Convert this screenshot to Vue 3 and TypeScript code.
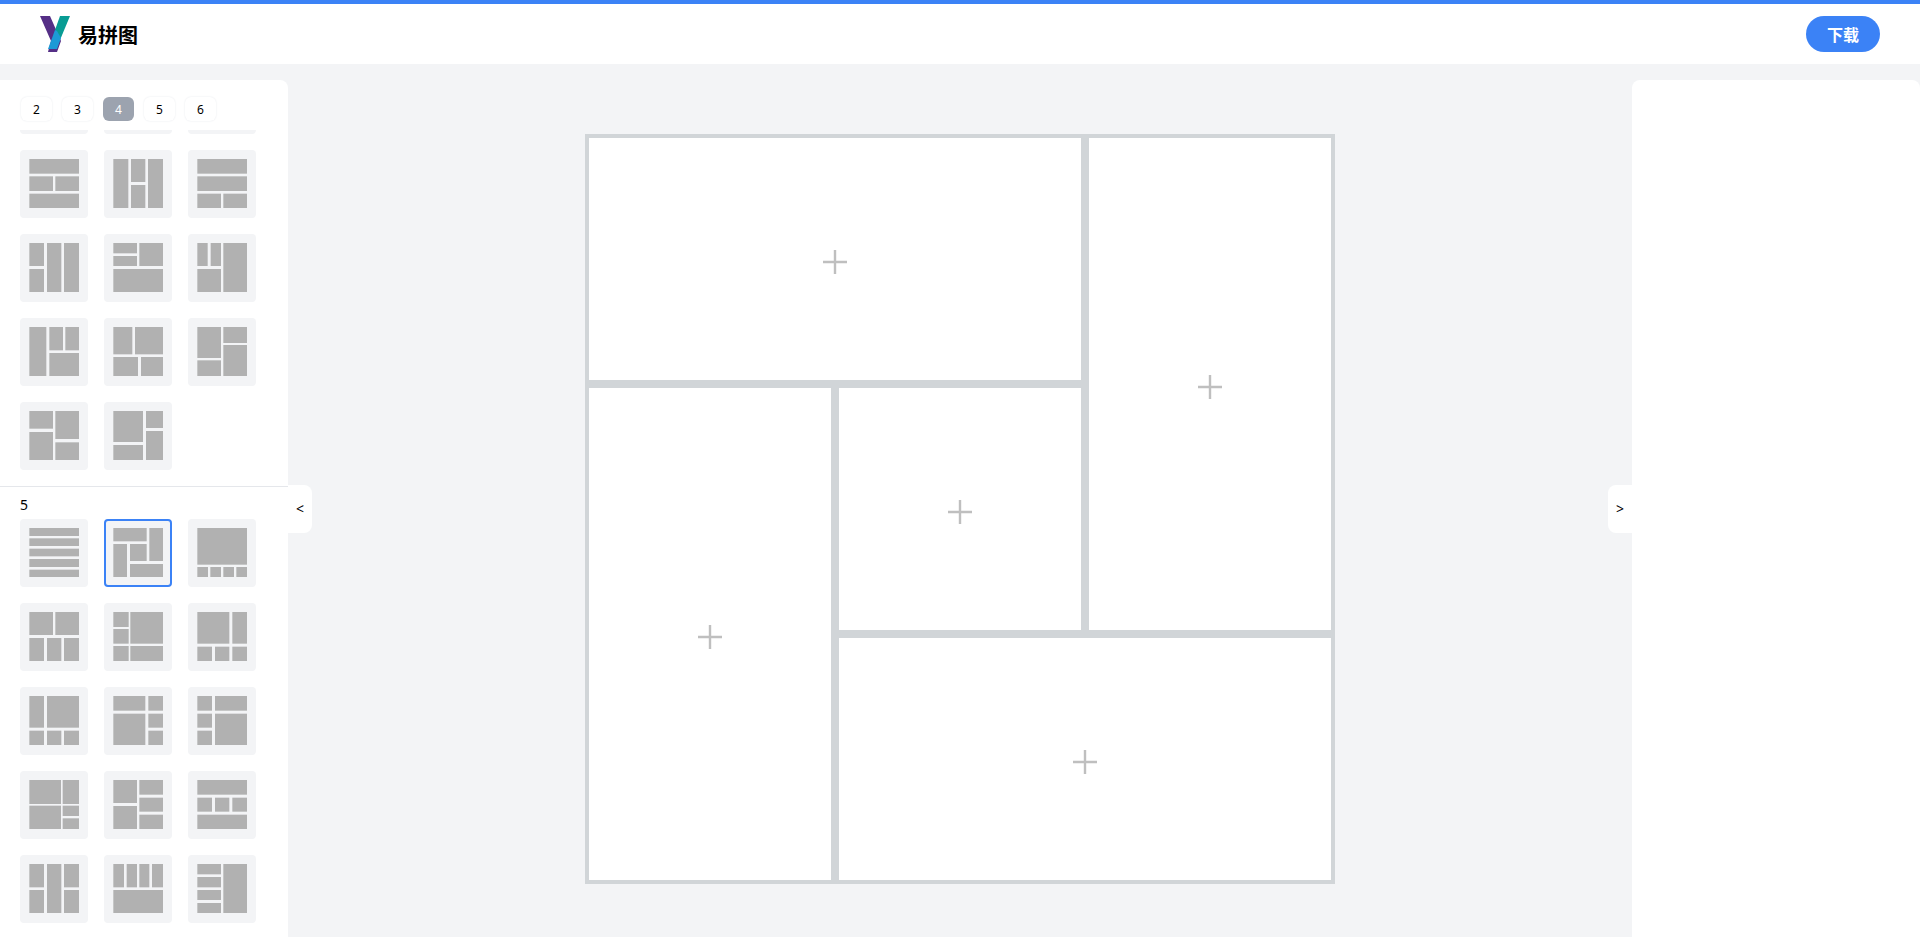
<script setup lang="ts">
import { onMounted, ref } from 'vue'

// Each block is [left, top, right, bottom] on a 149 x 147 board.
type Block = [number, number, number, number]
interface Layout {
  id: string
  blocks: Block[]
}
interface Group {
  count: number
  title?: string
  layouts: Layout[]
}

const groups: Group[] = [
  {
    count: 4,
    layouts: [
      { id: '4-rows', blocks: [[0, 0, 149, 32], [0, 38, 149, 70], [0, 77, 149, 109], [0, 115, 149, 147]] },
      { id: '4-cols', blocks: [[0, 0, 32, 147], [39, 0, 71, 147], [78, 0, 110, 147], [117, 0, 149, 147]] },
      { id: '4-grid', blocks: [[0, 0, 71, 70], [78, 0, 149, 70], [0, 77, 71, 147], [78, 77, 149, 147]] },
      { id: '4-a', blocks: [[0, 0, 149, 44], [0, 52, 71, 96], [78, 52, 149, 96], [0, 104, 149, 147]] },
      { id: '4-b', blocks: [[0, 0, 45, 147], [53, 0, 96, 69], [53, 78, 96, 147], [104, 0, 149, 147]] },
      { id: '4-c', blocks: [[0, 0, 149, 44], [0, 52, 149, 96], [0, 104, 71, 147], [78, 104, 149, 147]] },
      { id: '4-d', blocks: [[0, 0, 44, 69], [0, 78, 44, 147], [53, 0, 96, 147], [104, 0, 149, 147]] },
      { id: '4-e', blocks: [[0, 0, 71, 31], [0, 39, 71, 69], [78, 0, 149, 69], [0, 78, 149, 147]] },
      { id: '4-f', blocks: [[0, 0, 31, 69], [40, 0, 71, 69], [0, 78, 71, 147], [78, 0, 149, 147]] },
      { id: '4-g', blocks: [[0, 0, 51, 147], [60, 0, 101, 70], [108, 0, 149, 70], [60, 78, 149, 147]] },
      { id: '4-h', blocks: [[0, 0, 57, 82], [65, 0, 149, 82], [0, 90, 74, 147], [83, 90, 149, 147]] },
      { id: '4-i', blocks: [[0, 0, 71, 93], [0, 100, 71, 147], [78, 0, 149, 48], [78, 54, 149, 147]] },
      { id: '4-j', blocks: [[0, 0, 71, 53], [0, 63, 71, 147], [78, 0, 149, 84], [78, 94, 149, 147]] },
      { id: '4-k', blocks: [[0, 0, 89, 93], [0, 102, 89, 147], [98, 0, 149, 51], [98, 60, 149, 147]] }
    ]
  },
  {
    count: 5,
    title: '5',
    layouts: [
      { id: '5-a', blocks: [[0, 0, 149, 24], [0, 31, 149, 54], [0, 62, 149, 85], [0, 93, 149, 117], [0, 125, 149, 147]] },
      { id: '5-b', blocks: [[0, 0, 100, 40], [108, 0, 149, 99], [0, 48, 41, 147], [50, 48, 100, 99], [50, 108, 149, 147]] },
      { id: '5-c', blocks: [[0, 0, 149, 110], [0, 117, 32, 147], [39, 117, 71, 147], [78, 117, 110, 147], [117, 117, 149, 147]] },
      { id: '5-d', blocks: [[0, 0, 71, 69], [78, 0, 149, 69], [0, 78, 44, 147], [53, 78, 96, 147], [104, 78, 149, 147]] },
      { id: '5-e', blocks: [[0, 0, 46, 45], [0, 51, 46, 95], [51, 0, 149, 95], [0, 102, 46, 147], [51, 102, 149, 147]] },
      { id: '5-f', blocks: [[0, 0, 96, 95], [105, 0, 149, 95], [0, 104, 44, 147], [53, 104, 96, 147], [105, 104, 149, 147]] },
      { id: '5-g', blocks: [[0, 0, 44, 95], [53, 0, 149, 95], [0, 104, 44, 147], [53, 104, 96, 147], [104, 104, 149, 147]] },
      { id: '5-h', blocks: [[0, 0, 96, 44], [105, 0, 149, 44], [0, 53, 96, 147], [105, 53, 149, 95], [105, 104, 149, 147]] },
      { id: '5-i', blocks: [[0, 0, 44, 44], [53, 0, 149, 44], [0, 53, 44, 95], [0, 104, 44, 147], [53, 53, 149, 147]] },
      { id: '5-j', blocks: [[0, 0, 95, 72], [100, 0, 149, 72], [0, 77, 95, 147], [100, 77, 149, 108], [100, 115, 149, 147]] },
      { id: '5-k', blocks: [[0, 0, 71, 69], [0, 78, 71, 147], [78, 0, 149, 44], [78, 53, 149, 95], [78, 104, 149, 147]] },
      { id: '5-l', blocks: [[0, 0, 149, 44], [0, 53, 44, 95], [53, 53, 96, 95], [105, 53, 149, 95], [0, 104, 149, 147]] },
      { id: '5-m', blocks: [[0, 0, 44, 70], [0, 78, 44, 147], [53, 0, 96, 147], [104, 0, 149, 70], [104, 78, 149, 147]] },
      { id: '5-n', blocks: [[0, 0, 32, 70], [40, 0, 71, 70], [78, 0, 108, 70], [116, 0, 149, 70], [0, 78, 149, 147]] },
      { id: '5-o', blocks: [[0, 0, 71, 31], [0, 39, 71, 70], [0, 78, 71, 108], [0, 117, 71, 147], [78, 0, 149, 147]] }
    ]
  }
]

const counts = [2, 3, 4, 5, 6]
const activeCount = ref(4)
const selected = ref('5-b')
const list = ref<HTMLElement | null>(null)
const cells = ['top', 'right', 'left', 'middle', 'bottom']

onMounted(() => {
  if (list.value) list.value.scrollTop = 72
})
</script>

<template>
  <div class="app">
    <header class="header">
      <div class="brand">
        <svg class="logo" viewBox="0 0 30 36" aria-hidden="true">
          <path fill="#552f86" d="M0 0h10l11 25-4 11H8l1-4 2-7z" />
          <path fill="#089c94" d="M20 0h10L20 24l-5-10z" />
          <path fill="#1d9ad6" d="M15 14l2 1 4 7-4 11H8z" />
        </svg>
        <h1 class="title">易拼图</h1>
      </div>
      <button class="download" type="button">下载</button>
    </header>

    <div class="body">
      <aside class="panel panel-left">
        <nav class="tabs">
          <button
            v-for="n in counts"
            :key="n"
            type="button"
            class="tab"
            :class="{ active: n === activeCount }"
            @click="activeCount = n"
          >{{ n }}</button>
        </nav>
        <div ref="list" class="list">
          <section v-for="group in groups" :key="group.count" class="group">
            <h2 v-if="group.title" class="group-title">{{ group.title }}</h2>
            <div class="thumbs">
              <button
                v-for="layout in group.layouts"
                :key="layout.id"
                type="button"
                class="thumb"
                :class="{ selected: layout.id === selected }"
                :aria-label="layout.id"
                @click="selected = layout.id"
              >
                <svg class="thumb-art" viewBox="-1 0 150 150" aria-hidden="true">
                  <rect
                    v-for="(b, i) in layout.blocks"
                    :key="i"
                    :x="b[0]"
                    :y="b[1]"
                    :width="b[2] - b[0]"
                    :height="b[3] - b[1]"
                  />
                </svg>
              </button>
            </div>
          </section>
        </div>
        <button class="handle handle-left" type="button">&lt;</button>
      </aside>

      <main class="stage">
        <div class="collage">
          <button v-for="cell in cells" :key="cell" type="button" class="cell" :class="cell" :aria-label="cell">
            <svg class="plus" viewBox="0 0 24 24" aria-hidden="true">
              <path d="M12 0v24M0 12h24" />
            </svg>
          </button>
        </div>
      </main>

      <aside class="panel panel-right">
        <button class="handle handle-right" type="button">&gt;</button>
      </aside>
    </div>
  </div>
</template>

<style>
body {
  margin: 0;
}
</style>

<style scoped>
.app {
  display: flex;
  flex-direction: column;
  height: 100vh;
  overflow: hidden;
  box-sizing: border-box;
  border-top: 4px solid #3b82f6;
  background: #f3f4f6;
  color: #000;
  font-family: "Noto Sans", "Noto Sans CJK SC", sans-serif;
}

button {
  margin: 0;
  padding: 0;
  border: 0;
  font-family: inherit;
  color: inherit;
  cursor: pointer;
}

.header {
  display: flex;
  align-items: center;
  justify-content: space-between;
  flex: none;
  height: 60px;
  padding: 0 40px;
  background: #fff;
}

.brand {
  display: flex;
  align-items: center;
  gap: 8px;
}

.logo {
  width: 30px;
  height: 36px;
}

.title {
  margin: 0;
  padding-top: 2px;
  font-size: 20px;
  line-height: 28px;
  font-weight: 700;
  font-family: "Noto Sans CJK SC", sans-serif;
}

.download {
  height: 36px;
  padding: 0 21px;
  border-radius: 18px;
  background: #3b82f6;
  color: #fff;
  font-size: 16px;
  line-height: 24px;
  font-weight: 700;
  font-family: "Noto Sans CJK SC", sans-serif;
}

.body {
  display: flex;
  flex: 1;
  min-height: 0;
  padding-top: 16px;
}

.panel {
  position: relative;
  display: flex;
  flex-direction: column;
  flex: none;
  width: 288px;
  background: #fff;
}

.panel-left {
  border-top-right-radius: 8px;
}

.panel-right {
  border-radius: 8px 8px 0 0;
}

.tabs {
  display: flex;
  gap: 10px;
  padding: 17px 21px 9px;
}

.tab {
  width: 31px;
  height: 24px;
  padding-top: 2px;
  border-radius: 6px;
  background: #fff;
  box-shadow: 0 0 2px #e5e7eb;
  font-size: 12px;
  line-height: 20px;
}

.tab.active {
  background: #9ca3af;
  box-shadow: none;
  color: #fff;
}

.list {
  flex: 1;
  min-height: 0;
  overflow-y: auto;
  scrollbar-width: none;
}

.group {
  padding: 8px 20px 16px;
}

.group + .group {
  border-top: 1px solid #e5e7eb;
}

.group-title {
  margin: 0 0 4px;
  font-size: 14px;
  line-height: 20px;
  font-weight: 400;
}

.thumbs {
  display: grid;
  grid-template-columns: repeat(3, 68px);
  gap: 16px;
}

.thumb {
  display: flex;
  align-items: center;
  justify-content: center;
  box-sizing: border-box;
  height: 68px;
  border-radius: 4px;
  background: #f3f4f6;
}

.thumb.selected {
  border: 2px solid #3b82f6;
}

.thumb-art {
  flex: none;
  width: 50px;
  height: 50px;
  fill: #b1b1b1;
}

.handle {
  position: absolute;
  top: 405px;
  width: 24px;
  height: 48px;
  background: #fff;
  font-size: 14px;
  line-height: 24px;
}

.handle-left {
  left: 100%;
  border-radius: 0 8px 8px 0;
}

.handle-right {
  right: 100%;
  border-radius: 8px 0 0 8px;
}

.stage {
  display: flex;
  align-items: center;
  justify-content: center;
  flex: 1;
  min-width: 0;
}

.collage {
  display: grid;
  grid-template-columns: repeat(3, 1fr);
  grid-template-rows: repeat(3, 1fr);
  grid-template-areas:
    "top top right"
    "left middle right"
    "left bottom bottom";
  gap: 8px;
  box-sizing: border-box;
  width: 750px;
  aspect-ratio: 1;
  padding: 4px;
  background: #d1d5d8;
}

.cell {
  display: flex;
  align-items: center;
  justify-content: center;
  padding-top: 7px;
  background: #fff;
}

.top {
  grid-area: top;
}

.right {
  grid-area: right;
}

.left {
  grid-area: left;
}

.middle {
  grid-area: middle;
}

.bottom {
  grid-area: bottom;
}

.plus {
  width: 24px;
  height: 24px;
  stroke: #bfbfbf;
  stroke-width: 2.4;
}
</style>
